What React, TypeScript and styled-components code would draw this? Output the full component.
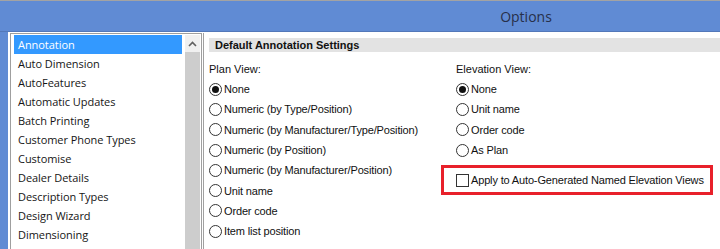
import React, { FC } from 'react';
import styled, { createGlobalStyle } from 'styled-components';

const GlobalStyle = createGlobalStyle`
	html, body {
		margin: 0;
		padding: 0;
		background: #ffffff;
	}
	body {
		font-family: 'Liberation Sans', Arial, sans-serif;
	}
`;

const categories = [
	'Annotation',
	'Auto Dimension',
	'AutoFeatures',
	'Automatic Updates',
	'Batch Printing',
	'Customer Phone Types',
	'Customise',
	'Dealer Details',
	'Description Types',
	'Design Wizard',
	'Dimensioning',
];

const planOptions = [
	'None',
	'Numeric (by Type/Position)',
	'Numeric (by Manufacturer/Type/Position)',
	'Numeric (by Position)',
	'Numeric (by Manufacturer/Position)',
	'Unit name',
	'Order code',
	'Item list position',
];

const elevationOptions = ['None', 'Unit name', 'Order code', 'As Plan'];

type RadioRowProps = {
	label: string;
	checked?: boolean;
};

const RadioRow: FC<RadioRowProps> = ({ label, checked }) => (
	<OptionRow>
		<RadioCircle>{checked && <RadioDot />}</RadioCircle>
		<OptionText>{label}</OptionText>
	</OptionRow>
);

const ScrollUpArrow: FC = () => (
	<svg width="9" height="6" viewBox="0 0 9 6">
		<path d="M1 5 L4.5 1.5 L8 5" fill="none" stroke="#606060" strokeWidth="1.6" />
	</svg>
);

export const App: FC = () => (
	<Window>
		<GlobalStyle />
		<TitleBar>
			<Title>Options</Title>
		</TitleBar>
		<Body>
			<FrameEdge />
			<Workspace>
				<ListBox>
					<Items>
						{categories.map((name, i) => (
							<Item key={name} selected={i === 0}>
								{name}
							</Item>
						))}
					</Items>
					<ScrollBar>
						<ScrollButton>
							<ScrollUpArrow />
						</ScrollButton>
						<ScrollTrack />
					</ScrollBar>
				</ListBox>
				<Panel>
					<SectionHeader>Default Annotation Settings</SectionHeader>
					<Columns>
						<Column>
							<ColumnLabel>Plan View:</ColumnLabel>
							{planOptions.map((opt, i) => (
								<RadioRow key={opt} label={opt} checked={i === 0} />
							))}
						</Column>
						<Column>
							<ColumnLabel>Elevation View:</ColumnLabel>
							{elevationOptions.map((opt, i) => (
								<RadioRow key={opt} label={opt} checked={i === 0} />
							))}
							<Highlight>
								<CheckBox />
								<OptionText>Apply to Auto-Generated Named Elevation Views</OptionText>
							</Highlight>
						</Column>
					</Columns>
				</Panel>
			</Workspace>
		</Body>
	</Window>
);

const Window = styled.div`
	width: 720px;
	height: 249px;
	overflow: hidden;
	display: flex;
	flex-direction: column;
	background: #ffffff;
	border-top: 1px solid #a3a3a3;
	box-sizing: border-box;
`;

const TitleBar = styled.div`
	height: 30px;
	flex-shrink: 0;
	background: #608bd4;
	border-bottom: 1px solid #5378b9;
	display: flex;
	align-items: center;
	justify-content: center;
	padding-left: 332px;
`;

const Title = styled.span`
	font-family: 'Open Sans', 'Liberation Sans', sans-serif;
	font-size: 14px;
	color: #27304a;
`;

const Body = styled.div`
	flex: 1;
	display: flex;
	min-height: 0;
`;

const FrameEdge = styled.div`
	width: 8px;
	flex-shrink: 0;
	background: #608bd4;
`;

const Workspace = styled.div`
	flex: 1;
	display: flex;
	padding: 1px 0 0 2px;
	gap: 1px;
	min-width: 0;
`;

const ListBox = styled.div`
	width: 192px;
	flex-shrink: 0;
	display: flex;
	gap: 3px;
	padding: 1px 1px 0 3px;
	border: 1px solid #9f9f9f;
	border-bottom: none;
	box-sizing: border-box;
`;

const Items = styled.div`
	width: 168px;
	display: flex;
	flex-direction: column;
`;

const Item = styled.div<{ selected?: boolean }>`
	height: 19px;
	flex-shrink: 0;
	display: flex;
	align-items: center;
	padding-left: 4px;
	font-family: 'Open Sans', 'Liberation Sans', sans-serif;
	font-size: 11px;
	letter-spacing: -0.05px;
	color: ${(props) => (props.selected ? '#ffffff' : '#151515')};
	background: ${(props) => (props.selected ? '#3399ff' : 'transparent')};
	white-space: nowrap;
`;

const ScrollBar = styled.div`
	width: 15px;
	display: flex;
	flex-direction: column;
`;

const ScrollButton = styled.div`
	height: 17px;
	background: #f0f0f0;
	display: flex;
	align-items: center;
	justify-content: center;
`;

const ScrollTrack = styled.div`
	flex: 1;
	background: #cdcdcd;
`;

const Panel = styled.div`
	flex: 1;
	border-left: 1px solid #a0a0a0;
	padding: 5px 0 0 5px;
	min-width: 0;
`;

const SectionHeader = styled.div`
	height: 14px;
	background: #e3e3e3;
	padding-left: 6px;
	font-size: 11px;
	font-weight: bold;
	line-height: 14px;
	color: #111111;
`;

const Columns = styled.div`
	display: flex;
	margin-top: 7px;
`;

const Column = styled.div`
	width: 247px;
	display: flex;
	flex-direction: column;
`;

const ColumnLabel = styled.div`
	height: 20px;
	display: flex;
	align-items: center;
	font-size: 11px;
	color: #111111;
`;

const OptionRow = styled.div`
	height: 20.3px;
	display: flex;
	align-items: center;
	gap: 2px;
`;

const OptionText = styled.span`
	font-size: 11px;
	color: #111111;
	white-space: nowrap;
	letter-spacing: -0.15px;
`;

const RadioCircle = styled.span`
	width: 13px;
	height: 13px;
	box-sizing: border-box;
	border: 1px solid #333333;
	border-radius: 50%;
	background: #ffffff;
	display: flex;
	align-items: center;
	justify-content: center;
	flex-shrink: 0;
`;

const RadioDot = styled.span`
	width: 7px;
	height: 7px;
	border-radius: 50%;
	background: #111111;
`;

const Highlight = styled.div`
	width: 272px;
	height: 30px;
	box-sizing: border-box;
	margin: 5px 0 0 -15px;
	border: 3px solid #e8202a;
	display: flex;
	align-items: center;
	gap: 2px;
	padding-left: 12px;
`;

const CheckBox = styled.span`
	width: 13px;
	height: 13px;
	box-sizing: border-box;
	border: 1px solid #333333;
	background: #ffffff;
	flex-shrink: 0;
`;

export default App;
